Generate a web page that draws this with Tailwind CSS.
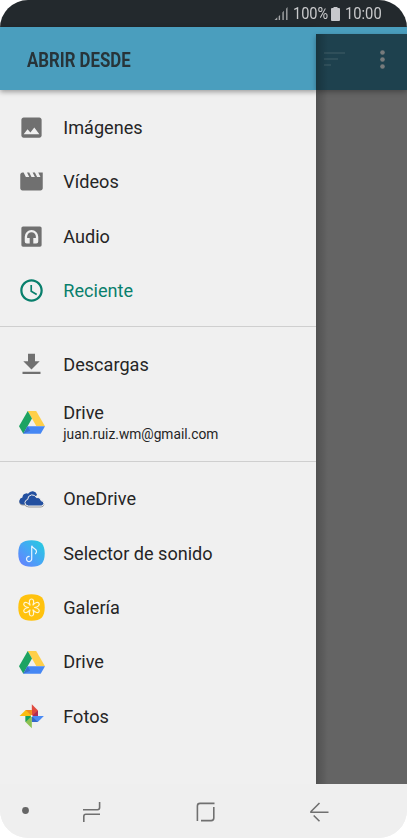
<!DOCTYPE html>
<html lang="es">
<head>
<meta charset="utf-8">
<title>Abrir desde</title>
<script src="https://cdn.jsdelivr.net/npm/@tailwindcss/browser@4"></script>
</head>
<body class="bg-white">
<svg class="hidden">
  <symbol id="drive" viewBox="0 0 26 23">
    <path d="M8.7 0H17.2L26 15.2H17.4Z" fill="#ffcf48"/>
    <path d="M8.7 0L0 15.2L4.3 22.8L13 7.6Z" fill="#1da362"/>
    <path d="M8.6 15.2H26L21.7 22.8H4.3Z" fill="#4587f4"/>
    <path d="M4.3 22.8L8.6 15.2L11.2 19.8Z" fill="#3a70d0"/>
  </symbol>
</svg>
<div class="flex h-[838px] w-[407px] flex-col overflow-hidden rounded-[28px] bg-[#f0f0f0] font-[Roboto,sans-serif] text-[#252525]">
  <div class="flex h-[27px] shrink-0 items-center justify-end bg-[#23292d] pr-[25px] text-[#c9cacc]">
    <svg class="mr-[5px] h-[13px] w-[14px]" viewBox="0 0 14 14" fill="#a4a6a8"><path d="M0 14L3 11V14ZM4.500 10L6 8.500V14H4.500ZM8.500 6L10 4V14H8.500ZM12.500 2L14 0V14H12.500Z"/></svg>
    <span class="flex w-[36px] text-[16px] leading-[27px]"><span class="origin-left scale-x-[0.91]">100%</span></span>
    <svg class="mr-[5px] ml-[2px] h-[14px] w-[9px]" viewBox="0 0 9 14" fill="#c7c8cc"><path d="M2.500 0H6.500V1H8Q9 1 9 2V13Q9 14 8 14H1Q0 14 0 13V2Q0 1 1 1H2.500Z"/></svg>
    <span class="flex w-[37px] text-[16px] leading-[27px]"><span class="origin-left scale-x-[0.92]">10:00</span></span>
  </div>
  <div class="flex h-[756.5px] shrink-0">
    <div class="w-[316.4px] shrink-0">
      <div class="relative flex h-[63.4px] items-center bg-[#4a9ebe] pt-[2px] pl-[27px] shadow-[0_2px_5px_rgba(0,0,0,0.35)]">
        <h1 class="origin-left scale-x-[0.84] text-[20px] font-bold whitespace-nowrap text-[#273439]">ABRIR DESDE</h1>
      </div>
      <ul class="flex h-[236.800px] flex-col border-b border-[#cfcfcf] pt-[9.800px] text-[18.1px]">
        <li class="flex h-[54.4px] items-center pl-[18px]">
          <svg class="mr-[18.3px] h-[27px] w-[27px]" viewBox="0 0 24 24" fill="#707070"><path d="M21 19V5c0-1.100-.9-2-2-2H5c-1.100 0-2 .9-2 2v14c0 1.100.9 2 2 2h14c1.100 0 2-.9 2-2zM8.500 13.500l2.500 3.010L14.500 12l4.500 6H5l3.500-4.500z"/></svg>
          <span>Imágenes</span></li>
        <li class="flex h-[54.4px] items-center pl-[18px]">
          <svg class="mr-[18.3px] h-[27px] w-[27px]" viewBox="0 0 24 24" fill="#707070"><path d="M18 4l2 4h-3l-2-4h-2l2 4h-3l-2-4H8l2 4H7L5 4H4c-1.100 0-1.990.9-1.990 2L2 18c0 1.100.9 2 2 2h16c1.100 0 2-.9 2-2V4h-4z"/></svg>
          <span>Vídeos</span></li>
        <li class="flex h-[54.4px] items-center pl-[18px]">
          <svg class="mr-[18.3px] h-[27px] w-[27px]" viewBox="0 0 24 24"><rect x="3" y="3" width="18" height="18" rx="1.500" fill="#707070"/><path d="M6 16.500V12.200a6 6 0 0 1 12 0V16.500Q18 18.300 16.200 18.300H13.600V13.400H15.900V12.200a3.900 3.900 0 0 0-7.800 0V13.400H10.400V18.300H7.800Q6 18.300 6 16.500Z" fill="#f0f0f0"/></svg>
          <span>Audio</span></li>
        <li class="flex h-[54.4px] items-center pl-[18px] text-[#087f6c]">
          <svg class="mr-[18.3px] h-[27px] w-[27px]" viewBox="0 0 24 24" fill="currentColor"><path d="M11.990 2C6.470 2 2 6.480 2 12s4.470 10 9.990 10C17.520 22 22 17.520 22 12S17.520 2 11.990 2zM12 20c-4.420 0-8-3.580-8-8s3.580-8 8-8 8 3.580 8 8-3.580 8-8 8zM12.500 7H11v6l5.250 3.150.75-1.230-4.500-2.670z"/></svg>
          <span>Reciente</span></li>
      </ul>
      <ul class="flex h-[135px] flex-col border-b border-[#cfcfcf] pt-[9.700px] text-[18.1px]">
        <li class="flex h-[54.4px] items-center pl-[18px]">
          <svg class="mr-[18.3px] h-[27px] w-[27px]" viewBox="0 0 24 24" fill="#707070"><path d="M19.300 9h-4.200V2.500H8.900V9H4.700l7.300 7.500zM4 18.500v2h16v-2z"/></svg>
          <span>Descargas</span></li>
        <li class="flex h-[62px] items-center pl-[18.500px]">
          <svg class="mr-[18.800px] h-[23px] w-[26px]"><use href="#drive"/></svg>
          <div class="flex flex-col pt-[2px]"><span class="leading-[22px]">Drive</span><span class="text-[13.75px] leading-[20px]">juan.ruiz.wm@gmail.com</span></div></li>
      </ul>
      <ul class="flex flex-col pt-[9.500px] text-[18.1px]">
        <li class="flex h-[54.4px] items-center pl-[18px]">
          <svg class="mr-[18.3px] h-[18px] w-[27px] overflow-visible drop-shadow-[0.5px_1px_0.5px_rgba(0,0,0,0.35)]" viewBox="0 0 27 18"><path d="M5 14.500Q1 14 1.300 10.800Q1.700 8 4.500 7.500Q4.500 4 7.800 3.400Q9 3.200 10 3.700Q12 .8 15 1.200Q18 1.700 19 4.500L13 10V14.500Z" fill="#2350a0"/><path d="M10.500 16Q6.700 15.600 6.900 12.500Q7.300 9.900 9.700 9.500Q9.700 5.600 13.500 4.900Q17 4.600 18.400 7.600Q22.200 7 23 10.600Q26 11 25.800 13.500Q25.500 15.800 23.200 16Z" fill="#2350a0" stroke="#efefef" stroke-width="1"/></svg>
          <span>OneDrive</span></li>
        <li class="flex h-[54.4px] items-center pl-[18px]">
          <svg class="mr-[18.3px] h-[27px] w-[27px]" viewBox="0 0 27 27" fill="none"><defs><linearGradient id="sound" x1="0" y1="1" x2="1" y2="0"><stop stop-color="#6a7cff"/><stop offset=".5" stop-color="#45a7f5"/><stop offset="1" stop-color="#22d0dc"/></linearGradient></defs><path d="M13.500 .3C23 .3 26.700 4 26.700 13.500S23 26.700 13.500 26.700S.3 23 .3 13.500S4 .3 13.500 .3Z" fill="url(#sound)"/><path d="M13.700 18.500V5.800C14.600 8.600 18.500 8.500 18.500 11.300Q18.500 12.600 17.500 13.700M13.700 18.800A2.600 2.600 0 1 1 11.100 16.400" stroke="#e8f5ff" stroke-width="1.200" stroke-linecap="round"/></svg>
          <span>Selector de sonido</span></li>
        <li class="flex h-[54.4px] items-center pl-[18px]">
          <svg class="mr-[18.3px] h-[27px] w-[27px]" viewBox="0 0 27 27" fill="none"><path d="M13.500 .3C23 .3 26.700 4 26.700 13.500S23 26.700 13.500 26.700S.3 23 .3 13.500S4 .3 13.500 .3Z" fill="#ffc20e"/><path d="M12 11C10.600 7.500 11.500 5 13.500 5S16.400 7.500 15 11C17.300 8.200 20 7.700 21 9.300S20 13 16.500 13.500C20 14 22 16 21 17.700S17.300 18.800 15 16C16.400 19.500 15.500 22 13.500 22S10.600 19.500 12 16C9.700 18.800 7 19.300 6 17.700S7 14 10.500 13.500C7 13 5 11 6 9.300S9.700 8.200 12 11Z" stroke="#fff6d5" stroke-width="1.200" stroke-linejoin="round"/></svg>
          <span>Galería</span></li>
        <li class="flex h-[54.4px] items-center pl-[18.500px]">
          <svg class="mr-[18.800px] h-[23px] w-[26px]"><use href="#drive"/></svg>
          <span>Drive</span></li>
        <li class="flex h-[54.4px] items-center pl-[18px]">
          <svg class="mr-[18.3px] h-[27px] w-[27px]" viewBox="0 0 27 27"><path d="M13.800 1.200L20 7.500V13H13.800Z" fill="#e04a3f"/><path d="M13.800 13L20 7.500V13Z" fill="#b02a55"/><path d="M1.600 13L7.700 7H13.800V13Z" fill="#fdbd10"/><path d="M7.700 7H13.800V13Z" fill="#f08c20"/><path d="M13.800 13H25.900L19.800 19.100H13.800Z" fill="#4a8af4"/><path d="M13.800 13V19.100H19.800Z" fill="#3468c8"/><path d="M13.800 13V25.300L7.500 19V13Z" fill="#8cc152"/><path d="M13.800 13H7.500V19Z" fill="#16a05d"/><circle cx="13.700" cy="13" r="1" fill="#f4f4f4"/></svg>
          <span>Fotos</span></li>
      </ul>
    </div>
    <div class="relative flex flex-1 flex-col bg-[#646464]">
      <div class="h-[7px] bg-[#4a9ebe]"></div>
      <div class="flex h-[56.4px] items-center justify-between bg-[#1e414e] pr-[22px] pl-[8px] shadow-[0_2px_5px_rgba(0,0,0,0.3)]">
        <svg class="mt-[-6px] h-[14px] w-[21px]" fill="#2f4f5a"><path d="M0 0H21V2H0ZM0 6H14V8H0ZM0 12H7V14H0Z"/></svg>
        <svg class="mt-[-6px] h-[19px] w-[5px]" fill="#777b7c"><circle cx="2.500" cy="2.500" r="2.300"/><circle cx="2.500" cy="9.500" r="2.300"/><circle cx="2.500" cy="16.500" r="2.300"/></svg>
      </div>
      <div class="absolute top-[7px] bottom-0 left-0 w-[12px] bg-gradient-to-r from-black/20 to-transparent"></div>
    </div>
  </div>
  <div class="flex h-[54.500px] items-center bg-[#efefef] pt-[2px] pl-[22px]">
    <svg class="mr-[53px] mb-[2px] h-[7px] w-[7px]" fill="#666"><circle cx="3.500" cy="3.500" r="3.400"/></svg>
    <svg class="mr-[95px] h-[22px] w-[19px]" fill="none" stroke="#707070" stroke-width="1.600"><path d="M1 8.700H15.500Q17.600 8.700 17.600 6.600V1M18 13.300H3.900Q1.800 13.300 1.800 15.400V21"/></svg>
    <svg class="mr-[95px] h-[20px] w-[19px]" fill="none" stroke="#707070" stroke-width="1.600"><path d="M1.400 19V4Q1.400 1.400 4 1.400H18.500M17.800 5V16Q17.800 18.600 15.200 18.600H5"/></svg>
    <svg class="h-[20px] w-[19px]" fill="none" stroke="#707070" stroke-width="1.600"><path d="M9.500 1L1 9.500V10.200H18.500M3.700 13.500L9.500 19.300"/></svg>
  </div>
</div>
</body>
</html>
